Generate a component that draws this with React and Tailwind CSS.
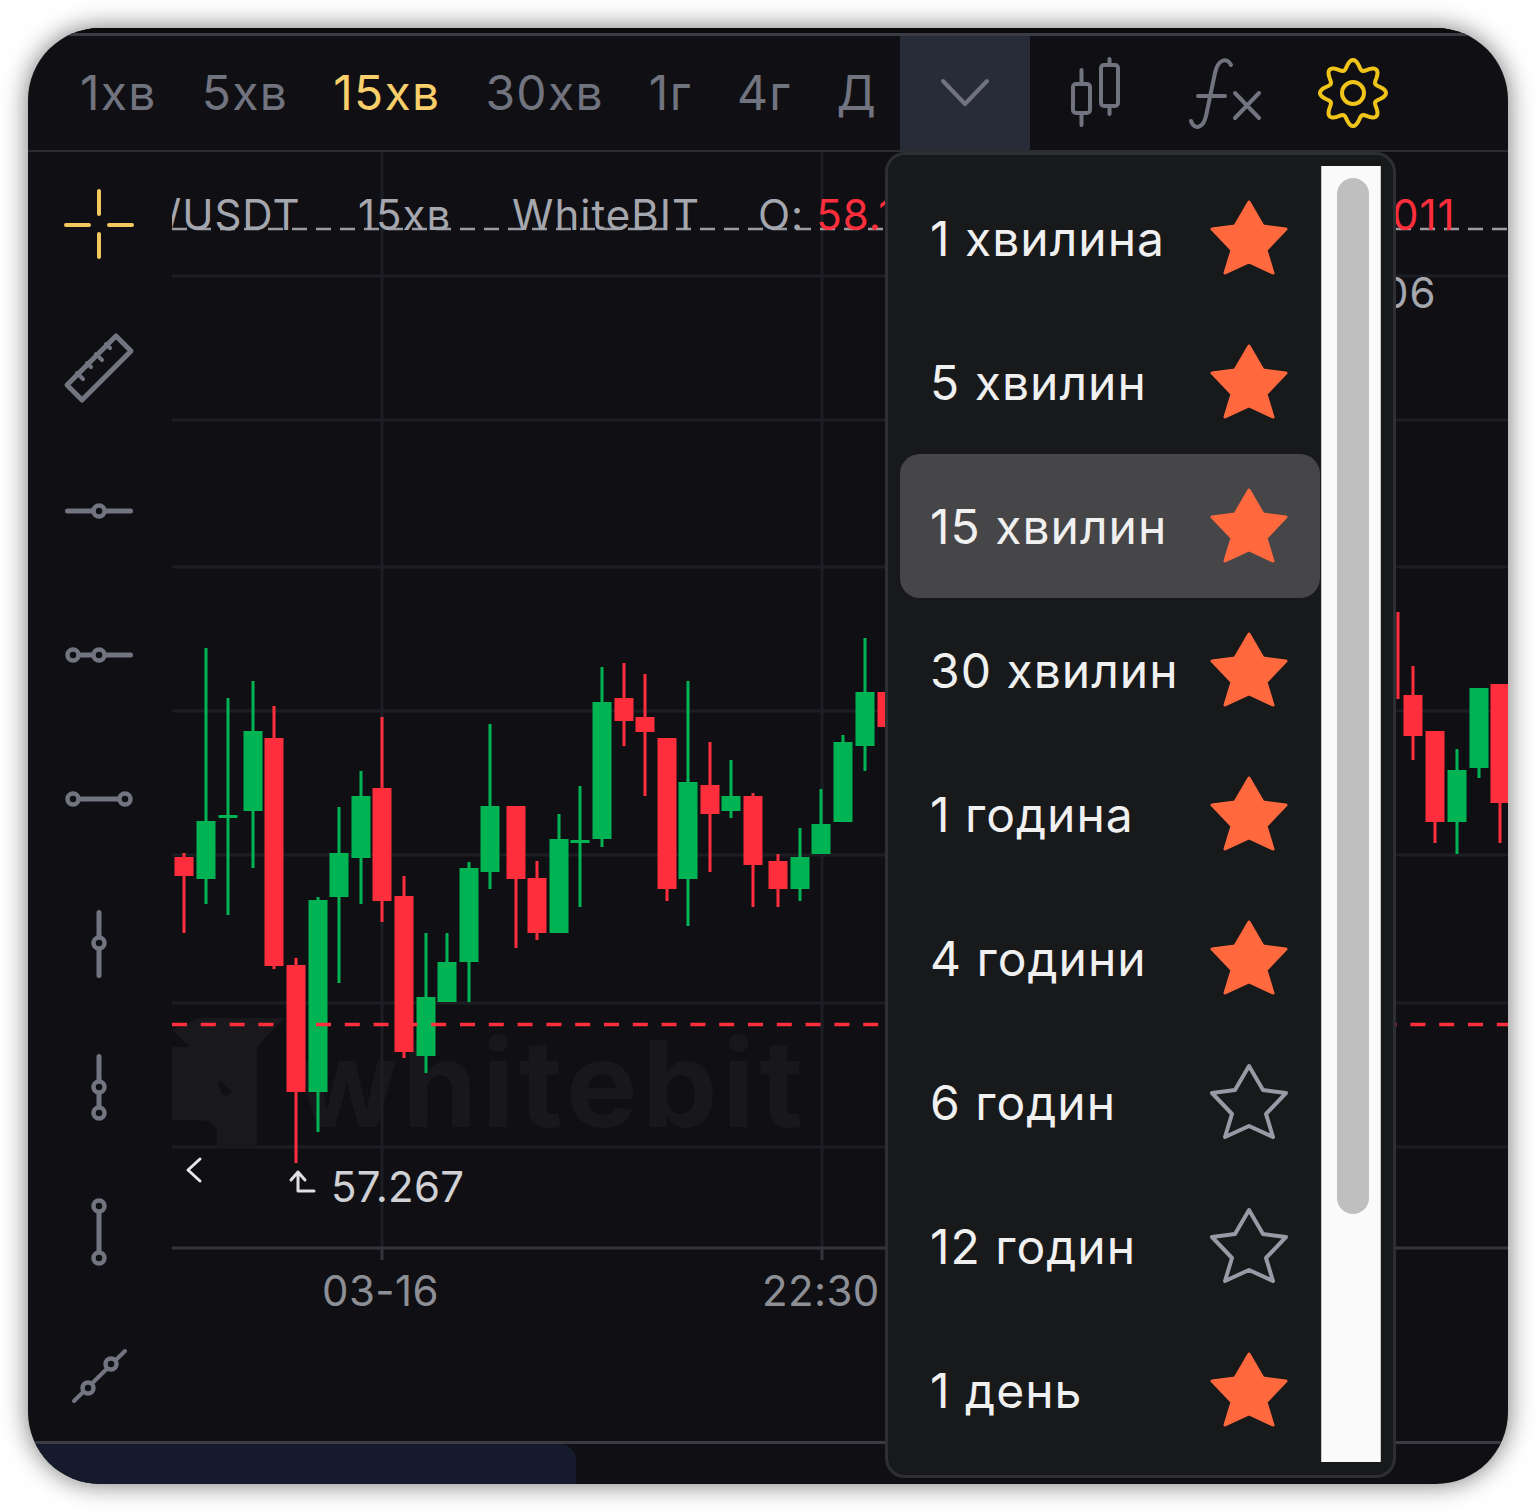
import React from 'react';

const timeframes = ['1хв', '5хв', '15хв', '30хв', '1г', '4г', 'Д'];

const intervals = [
  { label: '1 хвилина', fav: true },
  { label: '5 хвилин', fav: true },
  { label: '15 хвилин', fav: true, active: true },
  { label: '30 хвилин', fav: true },
  { label: '1 година', fav: true },
  { label: '4 години', fav: true },
  { label: '6 годин', fav: false },
  { label: '12 годин', fav: false },
  { label: '1 день', fav: true },
];

// x, wick top, wick bottom, body top, body bottom, up?
const candles = [
  [184, 853, 933, 857, 876, 0],
  [206, 648, 904, 821, 879, 1],
  [228, 698, 915, 815, 818, 1],
  [253, 681, 868, 731, 811, 1],
  [274, 706, 969, 738, 966, 0],
  [296, 958, 1163, 965, 1092, 0],
  [318, 897, 1132, 900, 1092, 1],
  [339, 807, 983, 853, 897, 1],
  [361, 771, 904, 796, 858, 1],
  [382, 717, 922, 788, 901, 0],
  [404, 876, 1058, 896, 1052, 0],
  [426, 933, 1073, 997, 1056, 1],
  [447, 933, 1002, 962, 1002, 1],
  [469, 862, 1002, 868, 962, 1],
  [490, 724, 889, 806, 872, 1],
  [516, 806, 948, 806, 879, 0],
  [537, 861, 940, 878, 933, 0],
  [559, 814, 933, 839, 933, 1],
  [580, 786, 907, 840, 843, 1],
  [602, 667, 847, 702, 839, 1],
  [624, 663, 746, 698, 721, 0],
  [645, 674, 796, 717, 732, 0],
  [667, 738, 901, 738, 889, 0],
  [688, 681, 926, 782, 879, 1],
  [710, 742, 872, 785, 814, 0],
  [731, 760, 818, 796, 811, 1],
  [753, 793, 907, 796, 865, 0],
  [778, 854, 907, 861, 889, 0],
  [800, 828, 901, 857, 889, 1],
  [821, 789, 854, 824, 854, 1],
  [843, 735, 822, 742, 822, 1],
  [865, 638, 771, 692, 746, 1],
  [887, 659, 753, 692, 727, 0],
  [1398, 612, 699, 612, 699, 0, true],
  [1413, 666, 760, 695, 736, 0],
  [1435, 731, 843, 731, 822, 0],
  [1457, 749, 854, 770, 822, 1],
  [1479, 688, 778, 688, 768, 1],
  [1500, 684, 843, 684, 803, 0],
];

const hLines = [420, 567, 711, 855, 1003, 1147];

const gearPath = Array.from({ length: 144 }, (_, i) => {
  const a = (i / 144) * Math.PI * 2;
  const r = 28.5 + 4.5 * Math.cos(8 * a);
  const x = 36 + r * Math.sin(a);
  const y = 36 - r * Math.cos(a);
  return `${i === 0 ? 'M' : 'L'}${x.toFixed(2)} ${y.toFixed(2)}`;
}).join(' ') + ' Z';

const STAR = '40,4 54,28 77,31 57,52 64,75 40,64 16,75 23,52 3,31 26,28';

function Star({ filled }) {
  return (
    <svg width="80" height="80" viewBox="0 0 80 80" className="shrink-0">
      {filled ? (
        <polygon points={STAR} fill="#ff693d" stroke="#ff693d" strokeWidth="3" strokeLinejoin="round" />
      ) : (
        <polygon points={STAR} fill="none" stroke="#9a9aa6" strokeWidth="4" strokeLinejoin="round" />
      )}
    </svg>
  );
}

function Ring({ cx, cy }) {
  return <circle cx={cx} cy={cy} r="5.5" fill="#101014" stroke="#72747f" strokeWidth="4.5" />;
}

function Tool({ children }) {
  return (
    <div className="h-[144px] flex items-center justify-center shrink-0">
      <svg width="72" height="72" viewBox="0 0 72 72" fill="none" stroke="#72747f" strokeWidth="5" strokeLinecap="round" strokeLinejoin="round">
        {children}
      </svg>
    </div>
  );
}

function Sidebar() {
  return (
    <div className="w-[142px] mr-[2px] shrink-0 flex flex-col">
      <Tool>
        <g stroke="#f5c85f" strokeWidth="4">
          <path d="M3 37H26M46 37H69M36 3V26M36 46V69" />
        </g>
      </Tool>
      <Tool>
        <path d="M53 4L68 19L19 68L4 53Z" />
        <path d="M14 41L20 47M24 31L28 35M33 22L39 28M43 12L47 16" strokeWidth="4" />
      </Tool>
      <Tool>
        <path d="M4.5 35H67.5" />
        <Ring cx={36} cy={35} />
      </Tool>
      <Tool>
        <path d="M10 35H67.5" />
        <Ring cx={10} cy={35} />
        <Ring cx={36} cy={35} />
      </Tool>
      <Tool>
        <path d="M10 35H62" />
        <Ring cx={10} cy={35} />
        <Ring cx={62} cy={35} />
      </Tool>
      <Tool>
        <path d="M36 4.5V67.5" />
        <Ring cx={36} cy={35} />
      </Tool>
      <Tool>
        <path d="M36 4.5V61" />
        <Ring cx={36} cy={35} />
        <Ring cx={36} cy={61} />
      </Tool>
      <Tool>
        <path d="M36 10V62" />
        <Ring cx={36} cy={10} />
        <Ring cx={36} cy={62} />
      </Tool>
      <Tool>
        <path d="M11 61L62 11" strokeWidth="4" />
        <Ring cx={25} cy={48} />
        <Ring cx={48} cy={24} />
      </Tool>
    </div>
  );
}

function ChartDrawing() {
  return (
    <svg className="absolute inset-0" width="1336" height="1289" viewBox="172 152 1336 1289" fill="none">
      <path d="M172 276H1508" stroke="#1d1e24" strokeWidth="3" />
      {hLines.map(y => (
        <path key={y} d={`M172 ${y}H1508`} stroke="#1d1e24" strokeWidth="3" />
      ))}
      <path d="M382 152V1248M822 152V1248" stroke="#1d1e24" strokeWidth="3" />
      <path d="M172 1248H1508M382 1248V1260M822 1248V1260" stroke="#33353a" strokeWidth="3" />

      {/* watermark logo */}
      <path
        d="M172 1030L198 1018H284L257 1047V1148H217V1134C217 1124 208 1120 198 1120H172Z"
        fill="#19191d"
      />
      <path d="M172 1030L190 1047H172Z" fill="#101014" />
      <path d="M219 1080L232 1092L226 1096C220 1094 218 1086 219 1080Z" fill="#101014" />

      <path d="M172 229H1508" stroke="#9a9aa2" strokeWidth="2.5" strokeDasharray="15 9" />

      {candles.map(([x, wt, wb, bt, bb, up, wickOnly], i) => {
        const color = up ? '#00b453' : '#ff2e3c';
        return (
          <g key={i}>
            <rect x={x - 1.5} y={wt} width="3" height={wb - wt} fill={color} />
            {!wickOnly && <rect x={x - 9.5} y={bt} width="19" height={bb - bt} fill={color} />}
          </g>
        );
      })}

      <path d="M172 1024.5H1508" stroke="#ff2e3c" strokeWidth="3.5" strokeDasharray="15 13.8" />

      {/* chart scroll back arrow, low price marker */}
      <path d="M200 1159L188 1170L200 1181" stroke="#e8e8ea" strokeWidth="3" strokeLinecap="round" strokeLinejoin="round" />
      <path d="M291 1180L298 1172L305 1180M298 1172V1191H314" stroke="#e0e0e3" strokeWidth="3" strokeLinecap="round" strokeLinejoin="round" />
    </svg>
  );
}

function Chart() {
  return (
    <div className="relative flex-1 overflow-hidden font-['Inter',sans-serif]">
      {/* watermark wordmark sits under the candles */}
      <span className="absolute left-[124px] top-[872px] text-[120px] leading-none font-bold tracking-[4.5px] text-[#18181c] whitespace-nowrap">
        whitebit
      </span>

      <ChartDrawing />

      <div className="absolute -left-[6px] top-[38px] flex items-center text-[42px] leading-[50px] tracking-[1px] text-[#a5a7af] whitespace-nowrap">
        <span className="w-[192px]">/USDT</span>
        <span className="w-[154px]">15хв</span>
        <span className="w-[246px]">WhiteBIT</span>
        <span>O:</span>
        <span className="ml-[12px] text-[#ff2e3c]">58.1</span>
      </div>
      <span className="absolute left-[1220px] top-[38px] text-[42px] leading-[50px] tracking-[1px] text-[#ff2e3c]">011</span>
      <span className="absolute left-[1210px] top-[116px] text-[42px] leading-[50px] tracking-[1px] text-[#a5a7af]">06</span>

      <span className="absolute left-[159px] top-[1010px] text-[42px] leading-[50px] tracking-[0.3px] text-[#d0d1d4]">57.267</span>
      <span className="absolute left-[150px] top-[1114px] text-[42px] leading-[50px] tracking-[0.4px] text-[#8d8f96]">03-16</span>
      <span className="absolute left-[590px] top-[1114px] text-[42px] leading-[50px] tracking-[0.4px] text-[#8d8f96]">22:30</span>
    </div>
  );
}

function IntervalMenu() {
  return (
    <div className="absolute left-[857px] top-[124px] w-[511px] h-[1326px] flex rounded-[20px] border-[3px] border-[#2e2f33] bg-[#18191b] pt-[11px] pl-[12px] pr-[12px] font-['Inter',sans-serif]">
      <div className="w-[420px] mr-[1px] shrink-0">
        {intervals.map(it => (
          <div
            key={it.label}
            className={`h-[144px] flex items-center justify-between pl-[30px] pr-[31px] rounded-[20px] ${it.active ? 'bg-[#464648]' : ''}`}
          >
            <span className="text-[48px] leading-none tracking-[1px] text-[#f0f0f0] whitespace-nowrap mt-[1px]">{it.label}</span>
            <Star filled={it.fav} />
          </div>
        ))}
      </div>
      <div className="w-[60px] h-[1296px] bg-[#fafafa] border-x border-[#c9c9c9] pt-[12px] pl-[15px]">
        <div className="w-[32px] h-[1036px] rounded-full bg-[#bfbfbf]" />
      </div>
    </div>
  );
}

export default function App() {
  return (
    <div className="min-h-[1512px] bg-white p-[28px]">
      <div className="relative w-[1480px] h-[1456px] rounded-[72px] overflow-hidden bg-[#101014] flex flex-col shadow-[0_0_26px_rgba(0,0,0,0.55)]">
        <div className="h-[8px] shrink-0 bg-[#0b0b0e] border-b-[3px] border-[#3a3b43]" />

        <div className="h-[116px] shrink-0 flex items-stretch pl-[52px] border-b-2 border-[#2c2d33] font-['Inter',sans-serif]">
          <div className="w-[796px] shrink-0 flex items-center gap-[45px] text-[48px] leading-none tracking-[1.3px] text-[#71737f]">
            {timeframes.map(t => (
              <span key={t} className={t === '15хв' ? 'text-[#f8cf6a]' : ''}>{t}</span>
            ))}
          </div>
          <div className="ml-[24px] w-[130px] bg-[#282c38] flex items-center justify-center">
            <svg width="50" height="30" viewBox="0 0 50 30" fill="none" stroke="#71737f" strokeWidth="4" strokeLinecap="round" strokeLinejoin="round">
              <path d="M3 3L25 26L47 3" />
            </svg>
          </div>
          <div className="flex items-center ml-[38px]">
            <svg width="54" height="72" viewBox="1068 58 54 72" fill="none" stroke="#71737f" strokeWidth="4" strokeLinecap="round" strokeLinejoin="round">
              <rect x="1073" y="85" width="17" height="29" rx="3" />
              <path d="M1081.5 71V85M1081.5 114V126" />
              <rect x="1101" y="66" width="17" height="41" rx="3" />
              <path d="M1109.5 60V66M1109.5 107V115" />
            </svg>
            <svg className="ml-[63px]" width="80" height="76" viewBox="1186 54 80 76" fill="none" stroke="#71737f" strokeWidth="4" strokeLinecap="round" strokeLinejoin="round">
              <path d="M1192 120C1195 129 1204 128 1207 115L1216 72C1219 58 1228 56 1232 64" />
              <path d="M1199 95H1226" />
              <path d="M1236 92L1260 117M1260 92L1236 117" />
            </svg>
            <svg className="ml-[52px]" width="72" height="72" viewBox="0 0 72 72" fill="none" stroke="#f0c419" strokeWidth="4" strokeLinejoin="round">
              <path d={gearPath} />
              <circle cx="36" cy="36" r="11" />
            </svg>
          </div>
        </div>

        <div className="h-[1289px] shrink-0 flex">
          <Sidebar />
          <Chart />
        </div>

        <div className="flex-1 border-t-[3px] border-[#3a3b43]">
          <div className="w-[548px] h-full bg-[#151b2c] rounded-tr-[16px]" />
        </div>

        <IntervalMenu />
      </div>
    </div>
  );
}
